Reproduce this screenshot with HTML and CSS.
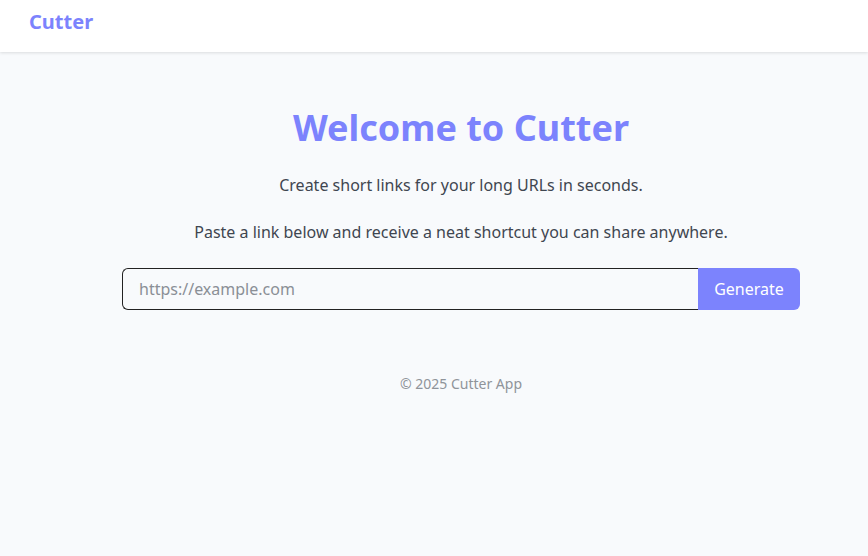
FILE: index.html
```html
<!DOCTYPE html>
<html>
<head>
<meta charset="utf-8">
<link rel="stylesheet" href="styles.css">
</head>
<body>
<header class="topbar">
  <div class="logo">Cutter</div>
</header>
<main class="main">
  <h1 class="title">Welcome to Cutter</h1>
  <p class="lead">Create short links for your long URLs in seconds.</p>
  <p class="lead">Paste a link below and receive a neat shortcut you can share anywhere.</p>
  <form class="form">
    <input class="url" type="text" placeholder="https://example.com">
    <button class="btn" type="button">Generate</button>
  </form>
  <footer class="foot">© 2025 Cutter App</footer>
</main>
</body>
</html>
```
FILE: styles.css
```css
html, body { margin: 0; padding: 0; }
body {
  font-family: "Noto Sans", "Open Sans", sans-serif;
  background: #f8fafc;
  color: #3f4650;
  height: 556px;
}
.topbar {
  height: 52px;
  box-sizing: border-box;
  background: #fff;
  box-shadow: 0 1px 3px rgba(0,0,0,0.12);
  display: flex;
  align-items: flex-start;
  padding: 8px 0 0 29px;
}
.logo {
  font-weight: 700;
  font-size: 20px;
  line-height: 28px;
  color: #7c83fd;
}
.main {
  display: flex;
  flex-direction: column;
  align-items: center;
  padding: 50px 0 0 54px;
}
.title {
  margin: 0;
  font-size: 36px;
  font-weight: 700;
  color: #7c83fd;
  line-height: 52px;
}
.lead {
  margin: 0;
  font-size: 16px;
  line-height: 24px;
}
.title + .lead { margin-top: 19px; }
.lead + .lead { margin-top: 23px; }
.form {
  display: flex;
  width: 678px;
  margin-top: 24px;
}
.url {
  flex: 1;
  height: 42px;
  box-sizing: border-box;
  border: 1px solid #222;
  border-right: none;
  border-radius: 6px 0 0 6px;
  background: #f8fafc;
  padding: 0 16px;
  font-family: inherit;
  font-size: 16px;
  color: #333;
  outline: none;
}
.url::placeholder { color: #8a8f96; }
.btn {
  width: 102px;
  height: 42px;
  border: none;
  border-radius: 0 6px 6px 0;
  background: #7c83fd;
  color: #fff;
  font-family: inherit;
  font-size: 16px;
}
.foot {
  margin-top: 64px;
  font-size: 14px;
  color: #8f949a;
}
```
